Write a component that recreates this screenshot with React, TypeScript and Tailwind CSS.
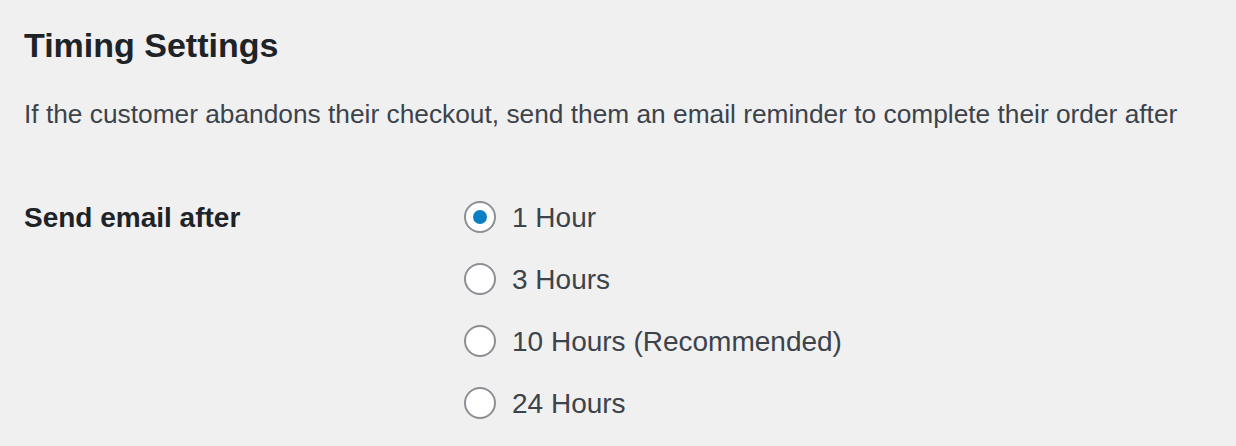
import { useState } from "react";

const options = [
  { value: "1", label: "1 Hour" },
  { value: "3", label: "3 Hours" },
  { value: "10", label: "10 Hours (Recommended)" },
  { value: "24", label: "24 Hours" },
];

function Radio({ checked }: { checked: boolean }) {
  return (
    <span className="mt-[3px] flex h-[32px] w-[32px] shrink-0 items-center justify-center rounded-full border-2 border-[#8c8f94] bg-white">
      {checked ? <span className="h-[14px] w-[14px] rounded-full bg-[#0b7fc4]" /> : null}
    </span>
  );
}

export default function App() {
  const [delay, setDelay] = useState("1");

  return (
    <div className="min-h-[446px] bg-[#f0f0f1] px-[24px] pt-[25px] font-['Liberation_Sans',Arial,sans-serif]">
      <h2 className="text-[34px] font-bold leading-[40px] text-[#1d2327]">Timing Settings</h2>
      <p className="mt-[31px] text-[26.3px] leading-[36px] text-[#3c434a]">
        If the customer abandons their checkout, send them an email reminder to complete their order after
      </p>
      <div className="mt-[66px] flex">
        <div className="w-[440px] shrink-0 text-[28px] font-bold leading-[40px] text-[#1d2327]">Send email after</div>
        <div className="flex flex-col gap-[22px]">
          {options.map((option) => (
            <label
              key={option.value}
              onClick={() => setDelay(option.value)}
              className="flex cursor-pointer items-start gap-[16px] text-[28px] leading-[40px] text-[#3c434a]"
            >
              <Radio checked={delay === option.value} />
              {option.label}
            </label>
          ))}
        </div>
      </div>
    </div>
  );
}
